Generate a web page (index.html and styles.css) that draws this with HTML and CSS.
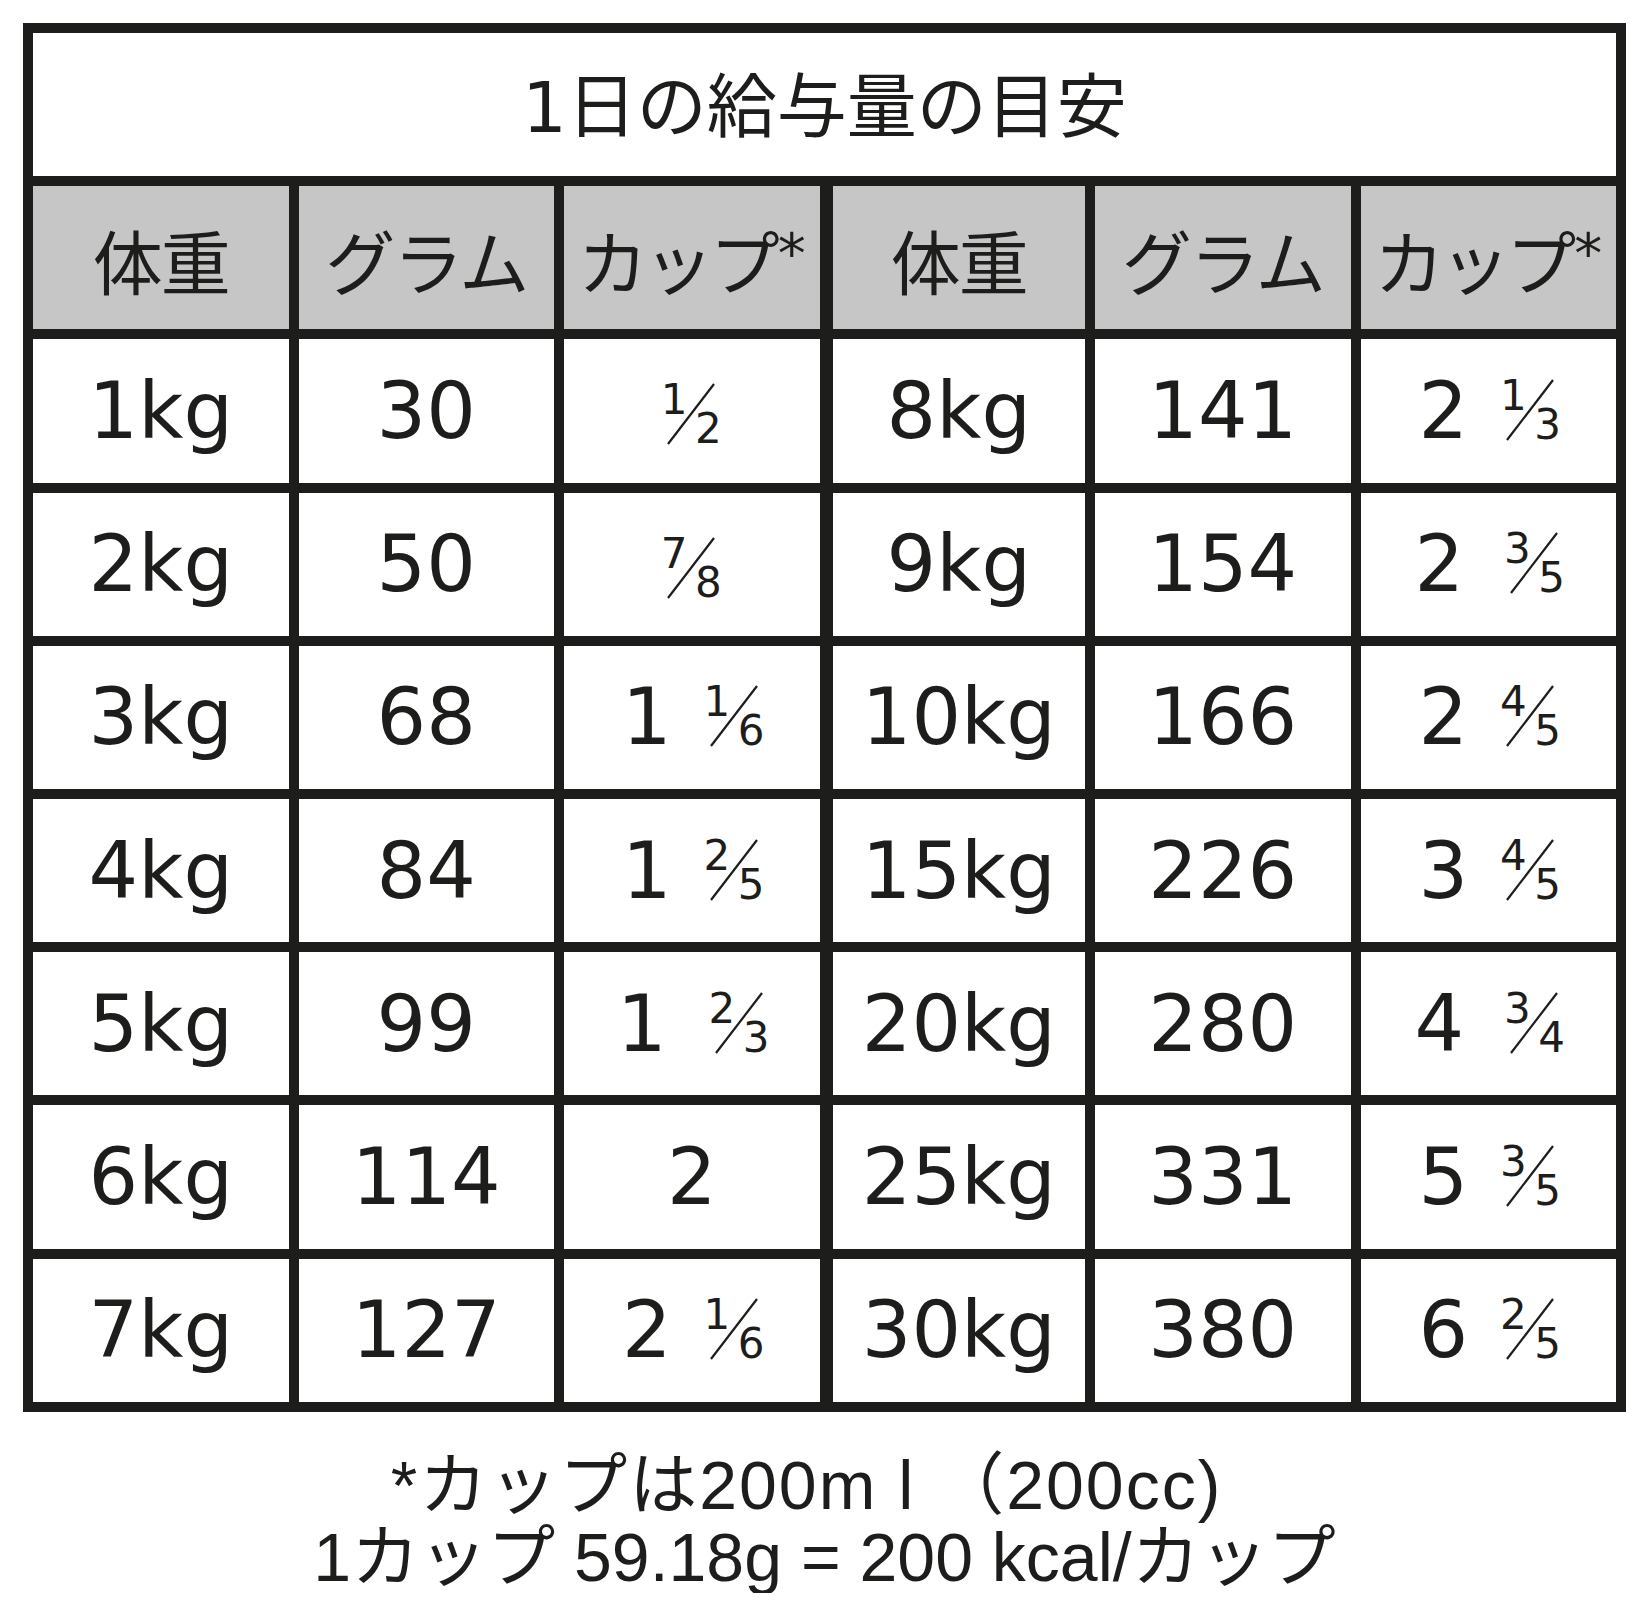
FILE: index.html
```html
<!DOCTYPE html>
<html lang="ja">
<head>
<meta charset="utf-8">
<title>1日の給与量の目安</title>
<link rel="stylesheet" href="styles.css">
</head>
<body>
<div class="table">
  <div class="cell title">1日の給与量の目安</div>

  <div class="cell head">体重</div>
  <div class="cell head">グラム</div>
  <div class="cell head cup">カップ<span class="ast">*</span></div>
  <div class="cell head mid">体重</div>
  <div class="cell head">グラム</div>
  <div class="cell head cup">カップ<span class="ast">*</span></div>

  <div class="cell"><span class="v">1kg</span></div>
  <div class="cell"><span class="v">30</span></div>
  <div class="cell"><span class="v"><span class="frac"><span class="num">1</span><svg class="sl" viewBox="0 0 54 62"><line x1="3" y1="61" x2="49" y2="1"/></svg><span class="den">2</span></span></span></div>
  <div class="cell mid"><span class="v">8kg</span></div>
  <div class="cell"><span class="v">141</span></div>
  <div class="cell"><span class="v">2<span class="frac gap"><span class="num">1</span><svg class="sl" viewBox="0 0 54 62"><line x1="3" y1="61" x2="49" y2="1"/></svg><span class="den">3</span></span></span></div>

  <div class="cell"><span class="v">2kg</span></div>
  <div class="cell"><span class="v">50</span></div>
  <div class="cell"><span class="v"><span class="frac"><span class="num">7</span><svg class="sl" viewBox="0 0 54 62"><line x1="3" y1="61" x2="49" y2="1"/></svg><span class="den">8</span></span></span></div>
  <div class="cell mid"><span class="v">9kg</span></div>
  <div class="cell"><span class="v">154</span></div>
  <div class="cell"><span class="v">2<span class="frac gap wide"><span class="num">3</span><svg class="sl" viewBox="0 0 54 62"><line x1="3" y1="61" x2="49" y2="1"/></svg><span class="den">5</span></span></span></div>

  <div class="cell"><span class="v">3kg</span></div>
  <div class="cell"><span class="v">68</span></div>
  <div class="cell"><span class="v">1<span class="frac gap one"><span class="num">1</span><svg class="sl" viewBox="0 0 54 62"><line x1="3" y1="61" x2="49" y2="1"/></svg><span class="den">6</span></span></span></div>
  <div class="cell mid"><span class="v">10kg</span></div>
  <div class="cell"><span class="v">166</span></div>
  <div class="cell"><span class="v">2<span class="frac gap"><span class="num">4</span><svg class="sl" viewBox="0 0 54 62"><line x1="3" y1="61" x2="49" y2="1"/></svg><span class="den">5</span></span></span></div>

  <div class="cell"><span class="v">4kg</span></div>
  <div class="cell"><span class="v">84</span></div>
  <div class="cell"><span class="v">1<span class="frac gap one"><span class="num">2</span><svg class="sl" viewBox="0 0 54 62"><line x1="3" y1="61" x2="49" y2="1"/></svg><span class="den">5</span></span></span></div>
  <div class="cell mid"><span class="v">15kg</span></div>
  <div class="cell"><span class="v">226</span></div>
  <div class="cell"><span class="v">3<span class="frac gap"><span class="num">4</span><svg class="sl" viewBox="0 0 54 62"><line x1="3" y1="61" x2="49" y2="1"/></svg><span class="den">5</span></span></span></div>

  <div class="cell"><span class="v">5kg</span></div>
  <div class="cell"><span class="v">99</span></div>
  <div class="cell"><span class="v">1<span class="frac gap one wide"><span class="num">2</span><svg class="sl" viewBox="0 0 54 62"><line x1="3" y1="61" x2="49" y2="1"/></svg><span class="den">3</span></span></span></div>
  <div class="cell mid"><span class="v">20kg</span></div>
  <div class="cell"><span class="v">280</span></div>
  <div class="cell"><span class="v">4<span class="frac gap wide"><span class="num">3</span><svg class="sl" viewBox="0 0 54 62"><line x1="3" y1="61" x2="49" y2="1"/></svg><span class="den">4</span></span></span></div>

  <div class="cell"><span class="v">6kg</span></div>
  <div class="cell"><span class="v">114</span></div>
  <div class="cell"><span class="v">2</span></div>
  <div class="cell mid"><span class="v">25kg</span></div>
  <div class="cell"><span class="v">331</span></div>
  <div class="cell"><span class="v">5<span class="frac gap"><span class="num">3</span><svg class="sl" viewBox="0 0 54 62"><line x1="3" y1="61" x2="49" y2="1"/></svg><span class="den">5</span></span></span></div>

  <div class="cell"><span class="v">7kg</span></div>
  <div class="cell"><span class="v">127</span></div>
  <div class="cell"><span class="v">2<span class="frac gap"><span class="num">1</span><svg class="sl" viewBox="0 0 54 62"><line x1="3" y1="61" x2="49" y2="1"/></svg><span class="den">6</span></span></span></div>
  <div class="cell mid"><span class="v">30kg</span></div>
  <div class="cell"><span class="v">380</span></div>
  <div class="cell"><span class="v">6<span class="frac gap"><span class="num">2</span><svg class="sl" viewBox="0 0 54 62"><line x1="3" y1="61" x2="49" y2="1"/></svg><span class="den">5</span></span></span></div>
</div>

<div class="notes">
  <p class="note first">*カップは200m l （200cc)</p>
  <p class="note">1カップ 59.18g = 200 kcal/カップ</p>
</div>
</body>
</html>
```

FILE: styles.css
```css
html, body {
  margin: 0;
  padding: 0;
  background: #ffffff;
}

body {
  padding: 23px 26px 0 23px;
  color: #1d1d1b;
}

.table {
  width: 1603px;
  box-sizing: border-box;
  display: grid;
  grid-template-columns: repeat(6, 1fr);
  grid-auto-rows: 143.2px;
  gap: 10px;
  padding: 10px;
  background: #1d1d1b;
  font-family: "DejaVu Sans", "Noto Sans CJK JP", sans-serif;
}

.cell {
  background: #ffffff;
  display: flex;
  align-items: center;
  justify-content: center;
  font-size: 78px;
  line-height: 1;
}

.cell.mid {
  margin-left: 3px;
}

.title {
  grid-column: 1 / -1;
  font-size: 70px;
  padding-top: 6px;
  box-sizing: border-box;
}

.head {
  background: #c6c6c6;
  font-family: "Noto Sans CJK JP", sans-serif;
  font-size: 70px;
  padding-top: 4px;
  box-sizing: border-box;
  letter-spacing: -2px;
}

.head.cup {
  letter-spacing: -4px;
}

.ast {
  font-family: "DejaVu Sans", sans-serif;
  font-size: 56px;
  letter-spacing: 0;
  align-self: flex-start;
  margin-top: 36px;
  margin-left: 2px;
}

.v {
  display: inline-flex;
  align-items: flex-start;
  white-space: nowrap;
  line-height: 1;
}

.frac {
  display: grid;
  grid-template-columns: 1fr;
  grid-template-rows: 1fr;
  width: 54px;
  height: 62px;
  margin-top: 7px;
  font-size: 42px;
  line-height: 1;
}

.frac > * {
  grid-area: 1 / 1;
}

.frac.gap {
  margin-left: 36px;
}

.frac.gap.one {
  margin-left: 36px;
}

.frac.gap.wide {
  margin-left: 44px;
}

.frac.gap.one.wide {
  margin-left: 46px;
}

.num {
  justify-self: start;
  align-self: start;
  margin-top: -4px;
  margin-left: -4px;
}

.den {
  justify-self: end;
  align-self: end;
  margin-bottom: -5px;
  margin-right: -3px;
}

.sl {
  width: 54px;
  height: 62px;
}

.sl line {
  stroke: #1d1d1b;
  stroke-width: 2.2;
}

.notes {
  width: 1603px;
  margin-top: 37px;
  font-family: "Liberation Sans", "Noto Sans CJK JP", sans-serif;
  font-size: 68px;
  line-height: 72px;
  text-align: center;
  color: #1d1d1b;
}

.note {
  margin: 0;
}

.note.first {
  letter-spacing: 2px;
  padding-right: 36px;
}
```
